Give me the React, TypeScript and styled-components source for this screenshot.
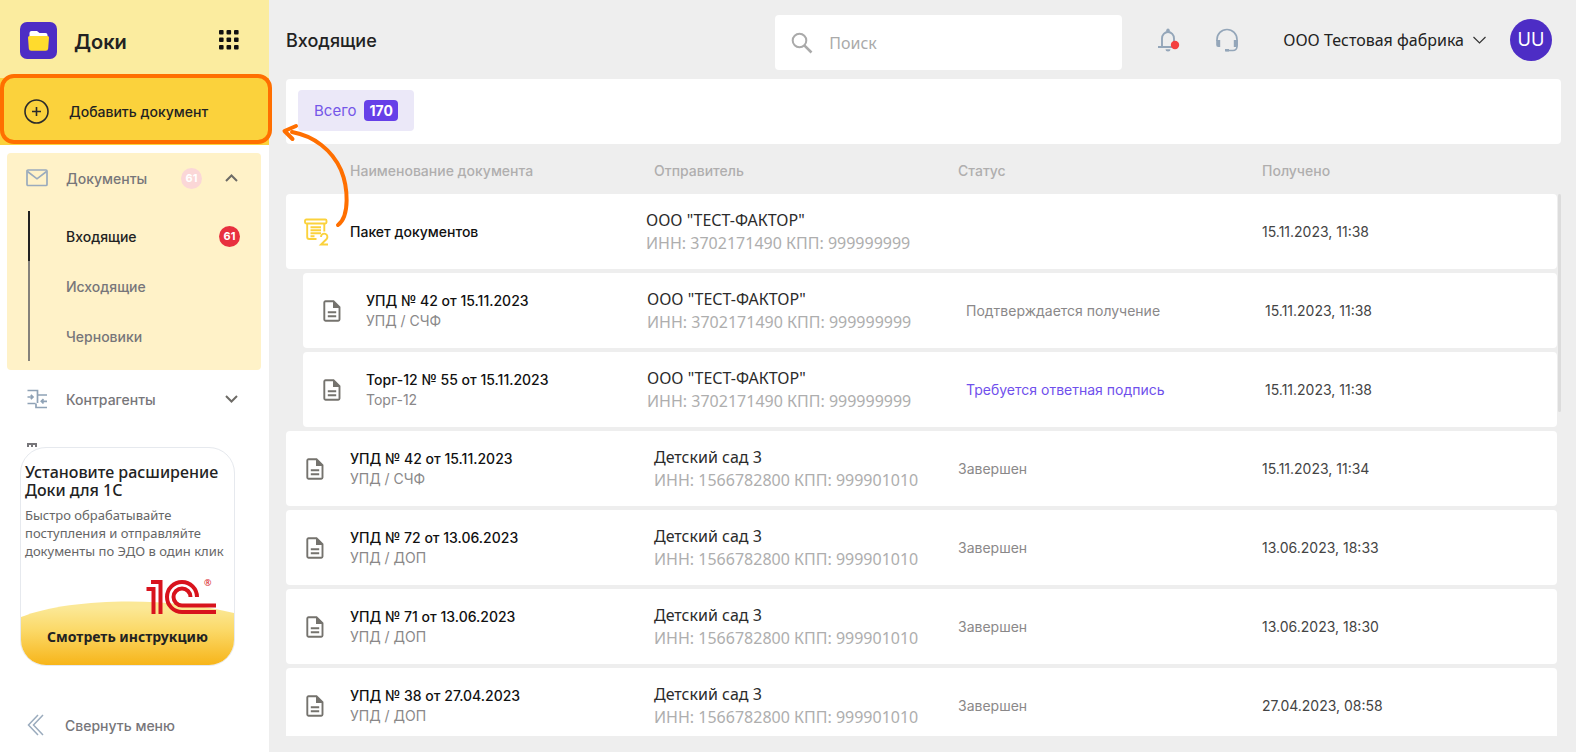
import React from "react";
import styled, { createGlobalStyle, css } from "styled-components";

const ui = `Inter, "Noto Sans", sans-serif`;
const text = `"Noto Sans", "Open Sans", sans-serif`;

const Global = createGlobalStyle`
  *, *::before, *::after { box-sizing: border-box; }
  body { margin: 0; background: #eeeeee; font-family: ${ui}; color: #222; }
  button, input { font: inherit; color: inherit; }
  button { border: 0; background: none; padding: 0; cursor: pointer; text-align: left; }
  a { color: inherit; text-decoration: none; }
  h1, h2, p { margin: 0; }
  svg { display: block; flex: none; }
`;

const Shell = styled.div`
  position: relative;
  display: flex;
  height: 100vh;
  min-height: 600px;
`;

/* ---------- sidebar ---------- */

const Sidebar = styled.aside`
  width: 269px;
  flex: none;
  display: flex;
  flex-direction: column;
  background: #fff;
`;

const Brand = styled.header`
  display: flex;
  align-items: center;
  height: 78px;
  flex: none;
  padding: 2px 30px 0 20px;
  background: #fbec9f;
`;

const BrandName = styled.span`
  flex: 1;
  padding: 3px 0 0 17px;
  font-size: 20px;
  font-weight: 600;
  line-height: 24px;
`;

const AddArea = styled.div`
  position: relative;
  height: 67px;
  flex: none;
  background: #fbd23c;
`;

const AddButton = styled.button`
  display: flex;
  align-items: center;
  gap: 20px;
  width: 100%;
  height: 67px;
  padding-left: 24px;
  font-size: 14px;
  font-weight: 500;
`;

const Highlight = styled.div`
  position: absolute;
  inset: -4px -3px 1px 0;
  border: 4px solid #ff6f00;
  border-radius: 14px;
  pointer-events: none;
  z-index: 2;
`;

const Nav = styled.nav`
  flex: 1;
  min-height: 0;
  overflow: hidden;
  padding-top: 8px;
`;

const Group = styled.section`
  margin: 0 8px 0 7px;
  padding-bottom: 9px;
  border-radius: 4px;
  background: #fff2c8;
`;

const NavButton = styled.button<{ $inset?: boolean; $h: number }>`
  display: flex;
  align-items: center;
  width: 100%;
  height: ${(p) => p.$h}px;
  padding: 0 ${(p) => (p.$inset ? 23 : 31)}px 0 ${(p) => (p.$inset ? 19 : 27)}px;
  font-size: 14px;
  font-weight: 500;
  color: #77767a;
`;

const NavLabel = styled.span`
  flex: 1;
  padding-left: 18px;
`;

const Count = styled.span<{ $muted?: boolean }>`
  display: inline-flex;
  align-items: center;
  justify-content: center;
  width: 21px;
  height: 21px;
  border-radius: 50%;
  font-size: 11px;
  font-weight: 700;
  color: #fff;
  background: ${(p) => (p.$muted ? "#fbd7d7" : "#e8303f")};
  margin-right: ${(p) => (p.$muted ? 23 : 0)}px;
`;

const SubList = styled.ul`
  list-style: none;
  margin: 8px 0 0 21px;
  padding: 0;
`;

const SubLink = styled.a<{ $active?: boolean }>`
  display: flex;
  align-items: center;
  justify-content: space-between;
  height: 50px;
  padding: 0 21px 0 36px;
  border-left: 2px solid ${(p) => (p.$active ? "#222" : "#85827b")};
  font-size: 14px;
  font-weight: 500;
  color: ${(p) => (p.$active ? "#222" : "#77767a")};
`;

const Promo = styled.section`
  position: relative;
  flex: none;
  display: flex;
  flex-direction: column;
  height: 219px;
  margin: 0 34px 0 20px;
  border: 1px solid #e6e9ee;
  border-radius: 26px;
  overflow: hidden;
  background: #fff;
  font-family: ${text};
`;

const PromoTitle = styled.h2`
  padding: 15px 0 0 4px;
  font-size: 16px;
  font-weight: 500;
  line-height: 18px;
  white-space: nowrap;
`;

const PromoText = styled.p`
  padding: 7px 0 0 4px;
  font-size: 13px;
  line-height: 18px;
  color: #666;
  white-space: nowrap;
`;

const PromoArt = styled.svg`
  position: absolute;
  left: 0;
  bottom: 0;
`;

const PromoButton = styled.button`
  position: relative;
  margin-top: auto;
  height: 58px;
  text-align: center;
  font-size: 14px;
  font-weight: 700;
`;

const Collapse = styled.button`
  display: flex;
  align-items: center;
  flex: none;
  gap: 21px;
  height: 54px;
  margin-top: 32px;
  padding-left: 27px;
  font-size: 14px;
  font-weight: 500;
  color: #77767a;
`;

/* ---------- main area ---------- */

const Main = styled.main`
  flex: 1;
  min-width: 0;
  display: flex;
  flex-direction: column;
  padding: 0 15px 16px 17px;
`;

const TopBar = styled.header`
  display: flex;
  align-items: center;
  flex: none;
  height: 79px;
  padding-right: 9px;
`;

const Title = styled.h1`
  flex: 1;
  padding-top: 2px;
  font-size: 18px;
  font-weight: 500;
  line-height: 24px;
`;

const Search = styled.label`
  display: flex;
  align-items: center;
  gap: 16px;
  width: 347px;
  height: 55px;
  margin-top: 6px;
  padding: 0 16px;
  border-radius: 4px;
  background: #fff;
`;

const SearchInput = styled.input`
  flex: 1;
  min-width: 0;
  padding: 0;
  border: 0;
  outline: 0;
  background: none;
  font-family: ${text};
  font-size: 16px;
  &::placeholder { color: #aaa; opacity: 1; }
`;

const Tools = styled.div`
  display: flex;
  align-items: center;
  gap: 35px;
  margin-left: 36px;
`;

const Company = styled.button`
  display: flex;
  align-items: center;
  gap: 9px;
  margin-left: 44px;
  font-family: ${text};
  font-size: 16px;
  white-space: nowrap;
`;

const Avatar = styled.button`
  display: flex;
  align-items: center;
  justify-content: center;
  width: 42px;
  height: 42px;
  margin-left: 24px;
  border-radius: 50%;
  background: #4d2dc5;
  color: #fff;
  font-size: 18px;
`;

const Filters = styled.div`
  flex: none;
  display: flex;
  padding: 11px 12px 13px;
  border-radius: 4px;
  background: #fff;
`;

const Chip = styled.button`
  display: flex;
  align-items: center;
  gap: 8px;
  height: 41px;
  padding: 0 16px;
  border-radius: 4px;
  background: #ebe8f8;
  font-size: 15px;
  color: #7557e8;
`;

const ChipCount = styled.span`
  padding: 0 5px;
  border-radius: 4px;
  background: #6640e8;
  color: #fff;
  font-weight: 700;
  font-size: 14px;
  line-height: 21px;
`;

const Scroller = styled.div`
  flex: 1;
  min-height: 0;
  display: flex;
  overflow: hidden;
`;

const Table = styled.table`
  flex: 1;
  display: block;
`;

const Head = styled.thead`
  display: block;
`;

const Body = styled.tbody`
  display: grid;
  gap: 4px;
`;

type Kind = "package" | "child" | "plain";

const columns: Record<Kind, string> = {
  plain: "64px 304fr 304fr 304fr 295fr",
  package: "64px 296fr 312fr 304fr 295fr",
  child: "63px 281fr 319fr 299fr 292fr",
};

const HeadRow = styled.tr`
  display: grid;
  grid-template-columns: ${columns.plain};
  align-items: center;
  height: 50px;
  padding-top: 3px;
`;

const HeadCell = styled.th`
  padding: 0;
  text-align: left;
  font-size: 14px;
  font-weight: 500;
  color: #b0aeae;
`;

const Row = styled.tr<{ $kind: Kind }>`
  display: grid;
  grid-template-columns: ${(p) => columns[p.$kind]};
  align-items: center;
  height: 75px;
  border-radius: 4px;
  background: #fff;
  ${(p) => p.$kind === "child" && css`margin-left: 17px;`}
`;

const Cell = styled.td`
  padding: 0;
  font-size: 14px;
  line-height: 20px;
  white-space: nowrap;
  color: #444;
`;

const IconCell = styled(Cell)`
  padding-left: 17px;
`;

const DocName = styled.a`
  display: block;
  font-weight: 500;
  color: #111;
`;

const DocType = styled.span`
  display: block;
  color: #8a8889;
`;

const Sender = styled.span<{ $sub?: boolean }>`
  display: block;
  font-family: ${text};
  font-size: 16px;
  line-height: 23px;
  color: ${(p) => (p.$sub ? "#aeaeae" : "#2b2b2b")};
`;

const Status = styled.span<{ $action?: boolean }>`
  color: ${(p) => (p.$action ? "#7050ec" : "#8a8889")};
`;

const Track = styled.div`
  flex: none;
  width: 4px;
  margin-top: 50px;
  padding-left: 1px;
`;

const Thumb = styled.div`
  height: 218px;
  border-radius: 2px;
  background: #dcdcdc;
`;

const Arrow = styled.svg`
  position: absolute;
  left: 278px;
  top: 120px;
  pointer-events: none;
`;

/* ---------- icons ---------- */

const Logo = () => (
  <svg width="37" height="37" viewBox="0 0 37 37" aria-hidden="true">
    <rect width="37" height="37" rx="7" fill="#4d2dc5" />
    <path d="M9.500 18V11a2 2 0 0 1 2-2h5.500l2.500 2h6a2 2 0 0 1 2 2v5z" fill="#fff" />
    <path d="M8 15.500a1.500 1.500 0 0 1 1.500-1.500h18a1.500 1.500 0 0 1 1.500 1.600l-.8 10.900a2.500 2.500 0 0 1-2.500 2.300H11.300a2.500 2.500 0 0 1-2.500-2.300z" fill="#ffdb2d" />
  </svg>
);

const Grid = () => (
  <svg width="20" height="20" viewBox="0 0 20 20" fill="#111" aria-hidden="true">
    {[0, 7.500, 15].map((y) => [0, 7.500, 15].map((x) => (
      <rect key={`${x}-${y}`} x={x} y={y} width="4.600" height="4.600" rx="1" />
    )))}
  </svg>
);

const Plus = () => (
  <svg width="25" height="25" viewBox="0 0 25 25" fill="none" stroke="#2b2b2b" strokeWidth="1.600" aria-hidden="true">
    <circle cx="12.500" cy="12.500" r="11.500" />
    <path d="M12.500 8v9M8 12.500h9" />
  </svg>
);

const Mail = () => (
  <svg width="22" height="18" viewBox="0 0 22 18" fill="none" stroke="#9aabbd" strokeWidth="1.700" aria-hidden="true">
    <rect x="1" y="1" width="20" height="15.500" rx="1" />
    <path d="M1.500 2.500L11 9.800l9.500-7.300" />
  </svg>
);

const Chevron = ({ up }: { up?: boolean }) => (
  <svg width="13" height="8" viewBox="0 0 13 8" fill="none" stroke="#6d6b66" strokeWidth="2" aria-hidden="true">
    <path d={up ? "M1 7l5.500-5.500L12 7" : "M1 1l5.500 5.500L12 1"} />
  </svg>
);

const Partners = () => (
  <svg width="21" height="20" viewBox="0 0 21 20" fill="none" stroke="#8fa2b6" strokeWidth="1.700" aria-hidden="true">
    <path d="M.5 1.500h10v12.500M.5 14.500h8M12 6h8M9 14.500v4h11M10.500 6h2" />
    <path d="M.5 8h5M3.800 5.800L6 8 3.800 10.200M20 12.300h-5M16.500 10.100l-2.200 2.200 2.200 2.200" />
  </svg>
);

const Report = () => (
  <svg width="20" height="20" viewBox="0 0 20 20" fill="none" stroke="#77767a" strokeWidth="2" aria-hidden="true">
    <path d="M0 1h10M1 1v18h14M5 1v6M9 1v6" />
  </svg>
);

const Back = () => (
  <svg width="17" height="22" viewBox="0 0 17 22" fill="none" stroke="#9aabbd" strokeWidth="1.500" aria-hidden="true">
    <path d="M11 1L1.500 11 11 21M16 1L6.500 11 16 21" />
  </svg>
);

const SearchIcon = () => (
  <svg width="22" height="22" viewBox="0 0 22 22" fill="none" stroke="#aaa" strokeWidth="2" aria-hidden="true">
    <circle cx="8.500" cy="8.500" r="6.800" />
    <path d="M13.300 13.300l7.200 7.200" strokeWidth="2.600" />
  </svg>
);

const Bell = () => (
  <svg width="22" height="24" viewBox="0 0 22 24" aria-hidden="true">
    <path d="M4 18.500V10.500a6 6.500 0 0 1 12 0V18.500M0 19h20" fill="none" stroke="#94a6b9" strokeWidth="1.900" />
    <path d="M7.500 21.300h5a2.500 2.300 0 0 1-5 0z" fill="#94a6b9" />
    <path d="M8.300 4.500V2.200a1.700 1.700 0 0 1 3.400 0V4.500z" fill="#94a6b9" />
    <circle cx="17" cy="17" r="4.200" fill="#f44040" />
  </svg>
);

const Headset = () => (
  <svg width="24" height="24" viewBox="0 0 24 24" aria-hidden="true">
    <path d="M2 13v-1.500a10 10 0 0 1 20 0V18.500a4 4 0 0 1-4 4H11" fill="none" stroke="#94a6b9" strokeWidth="1.700" />
    <path d="M1.200 12h4v7h-2a2 2 0 0 1-2-2zM22.800 12h-4v7h2a2 2 0 0 0 2-2z" fill="#94a6b9" />
    <path d="M10 21h4v2.500h-4z" fill="#94a6b9" />
  </svg>
);

const ThinChevron = () => (
  <svg width="13" height="8" viewBox="0 0 13 8" fill="none" stroke="#333" strokeWidth="1.200" aria-hidden="true">
    <path d="M.5 1l6 6 6-6" />
  </svg>
);

const DocIcon = () => (
  <svg width="24" height="24" viewBox="0 0 24 24" fill="none" stroke="#75736e" strokeWidth="1.900" aria-hidden="true">
    <path d="M5.500 2.200h8l6 6v12.300a1.200 1.200 0 0 1-1.200 1.200H5.500a1.200 1.200 0 0 1-1.200-1.200V3.400a1.200 1.200 0 0 1 1.200-1.200z" />
    <path d="M13 2v7h7z" fill="#75736e" stroke="none" />
    <path d="M7.800 13.200h8.400M7.800 17.200h8.400" />
  </svg>
);

const PackageIcon = () => (
  <svg width="28" height="28" viewBox="0 0 28 28" fill="none" stroke="#fbd23c" strokeWidth="1.900" aria-hidden="true">
    <rect x="2" y="1.500" width="21.500" height="4" rx="1.200" />
    <path d="M4.200 5.500v13.500a2 2 0 0 0 2 2H13.500M21.300 5.500v8M7.500 9.300h10.500M7.500 12.300h10.500M7.500 15.300h10.500M7.500 18.200h4" />
    <path d="M18 19a3.200 3.200 0 1 1 5.600 2L18 26.500h7" />
  </svg>
);

/* ---------- data ---------- */

type Doc = { kind: Kind; name: string; type?: string; sender: string; ids: string; status?: string; action?: boolean; date: string };

const factor = { sender: 'ООО "ТЕСТ-ФАКТОР"', ids: "ИНН: 3702171490 КПП: 999999999" };
const school = { sender: "Детский сад 3", ids: "ИНН: 1566782800 КПП: 999901010", status: "Завершен" };

const docs: Doc[] = [
  { kind: "package", name: "Пакет документов", ...factor, date: "15.11.2023, 11:38" },
  { kind: "child", name: "УПД № 42 от 15.11.2023", type: "УПД / СЧФ", ...factor, status: "Подтверждается получение", date: "15.11.2023, 11:38" },
  { kind: "child", name: "Торг-12 № 55 от 15.11.2023", type: "Торг-12", ...factor, status: "Требуется ответная подпись", action: true, date: "15.11.2023, 11:38" },
  { kind: "plain", name: "УПД № 42 от 15.11.2023", type: "УПД / СЧФ", ...school, date: "15.11.2023, 11:34" },
  { kind: "plain", name: "УПД № 72 от 13.06.2023", type: "УПД / ДОП", ...school, date: "13.06.2023, 18:33" },
  { kind: "plain", name: "УПД № 71 от 13.06.2023", type: "УПД / ДОП", ...school, date: "13.06.2023, 18:30" },
  { kind: "plain", name: "УПД № 38 от 27.04.2023", type: "УПД / ДОП", ...school, date: "27.04.2023, 08:58" },
];

export default function App() {
  return (
    <Shell>
      <Global />
      <Sidebar>
        <Brand>
          <Logo />
          <BrandName>Доки</BrandName>
          <button aria-label="Сервисы"><Grid /></button>
        </Brand>
        <AddArea>
          <AddButton><Plus />Добавить документ</AddButton>
          <Highlight />
        </AddArea>
        <Nav>
          <Group>
            <NavButton $inset $h={50}>
              <Mail />
              <NavLabel>Документы</NavLabel>
              <Count $muted>61</Count>
              <Chevron up />
            </NavButton>
            <SubList>
              <li><SubLink href="#in" $active>Входящие<Count>61</Count></SubLink></li>
              <li><SubLink href="#out">Исходящие</SubLink></li>
              <li><SubLink href="#drafts">Черновики</SubLink></li>
            </SubList>
          </Group>
          <NavButton $h={58}>
            <Partners />
            <NavLabel>Контрагенты</NavLabel>
            <Chevron />
          </NavButton>
          <NavButton $h={50} aria-label="Отчеты"><Report /></NavButton>
        </Nav>
        <Promo>
          <PromoArt width="213" height="88" viewBox="0 0 213 88" aria-hidden="true">
            <defs>
              <linearGradient id="promo" x1="0" y1="0" x2="0" y2="1">
                <stop offset="0.100" stopColor="#fbe896" />
                <stop offset="0.450" stopColor="#fbd968" />
                <stop offset="1" stopColor="#f7b51a" />
              </linearGradient>
            </defs>
            <path d="M0 40C50 20 150 20 213 36V88H0z" fill="url(#promo)" />
            <g fill="none" stroke="#d8131d" strokeWidth="4">
              <path d="M125.500 12H132.500V37M130 5H139.500V37" />
              <path d="M176 20A15 15 0 1 0 161 35H195M169.500 20A8.500 8.500 0 1 0 161 28.500H195" />
            </g>
            <text x="183" y="9" fontSize="9" fill="#d8131d">®</text>
          </PromoArt>
          <PromoTitle>Установите расширение<br />Доки для 1С</PromoTitle>
          <PromoText>Быстро обрабатывайте<br />поступления и отправляйте<br />документы по ЭДО в один клик</PromoText>
          <PromoButton>Смотреть инструкцию</PromoButton>
        </Promo>
        <Collapse><Back />Свернуть меню</Collapse>
      </Sidebar>

      <Main>
        <TopBar>
          <Title>Входящие</Title>
          <Search>
            <SearchIcon />
            <SearchInput type="search" placeholder="Поиск" aria-label="Поиск" />
          </Search>
          <Tools>
            <button aria-label="Уведомления"><Bell /></button>
            <button aria-label="Поддержка"><Headset /></button>
          </Tools>
          <Company>ООО Тестовая фабрика<ThinChevron /></Company>
          <Avatar>UU</Avatar>
        </TopBar>
        <Filters>
          <Chip>Всего<ChipCount>170</ChipCount></Chip>
        </Filters>
        <Scroller>
          <Table>
            <Head>
              <HeadRow>
                <td />
                <HeadCell scope="col">Наименование документа</HeadCell>
                <HeadCell scope="col">Отправитель</HeadCell>
                <HeadCell scope="col">Статус</HeadCell>
                <HeadCell scope="col">Получено</HeadCell>
              </HeadRow>
            </Head>
            <Body>
              {docs.map((d, i) => (
                <Row key={i} $kind={d.kind}>
                  <IconCell>{d.kind === "package" ? <PackageIcon /> : <DocIcon />}</IconCell>
                  <Cell>
                    <DocName href="#doc">{d.name}</DocName>
                    {d.type && <DocType>{d.type}</DocType>}
                  </Cell>
                  <Cell>
                    <Sender>{d.sender}</Sender>
                    <Sender $sub>{d.ids}</Sender>
                  </Cell>
                  <Cell><Status $action={d.action}>{d.status}</Status></Cell>
                  <Cell>{d.date}</Cell>
                </Row>
              ))}
            </Body>
          </Table>
          <Track><Thumb /></Track>
        </Scroller>
      </Main>

      <Arrow width="76" height="112" viewBox="0 0 76 112" fill="none" stroke="#ff6f00" strokeWidth="4" strokeLinecap="round" strokeLinejoin="round" aria-hidden="true">
        <path d="M60 105C72 96 70 67 63 50C54 30 36 16 14 12" />
        <path d="M18 6L6.500 11L14.500 19" />
      </Arrow>
    </Shell>
  );
}
